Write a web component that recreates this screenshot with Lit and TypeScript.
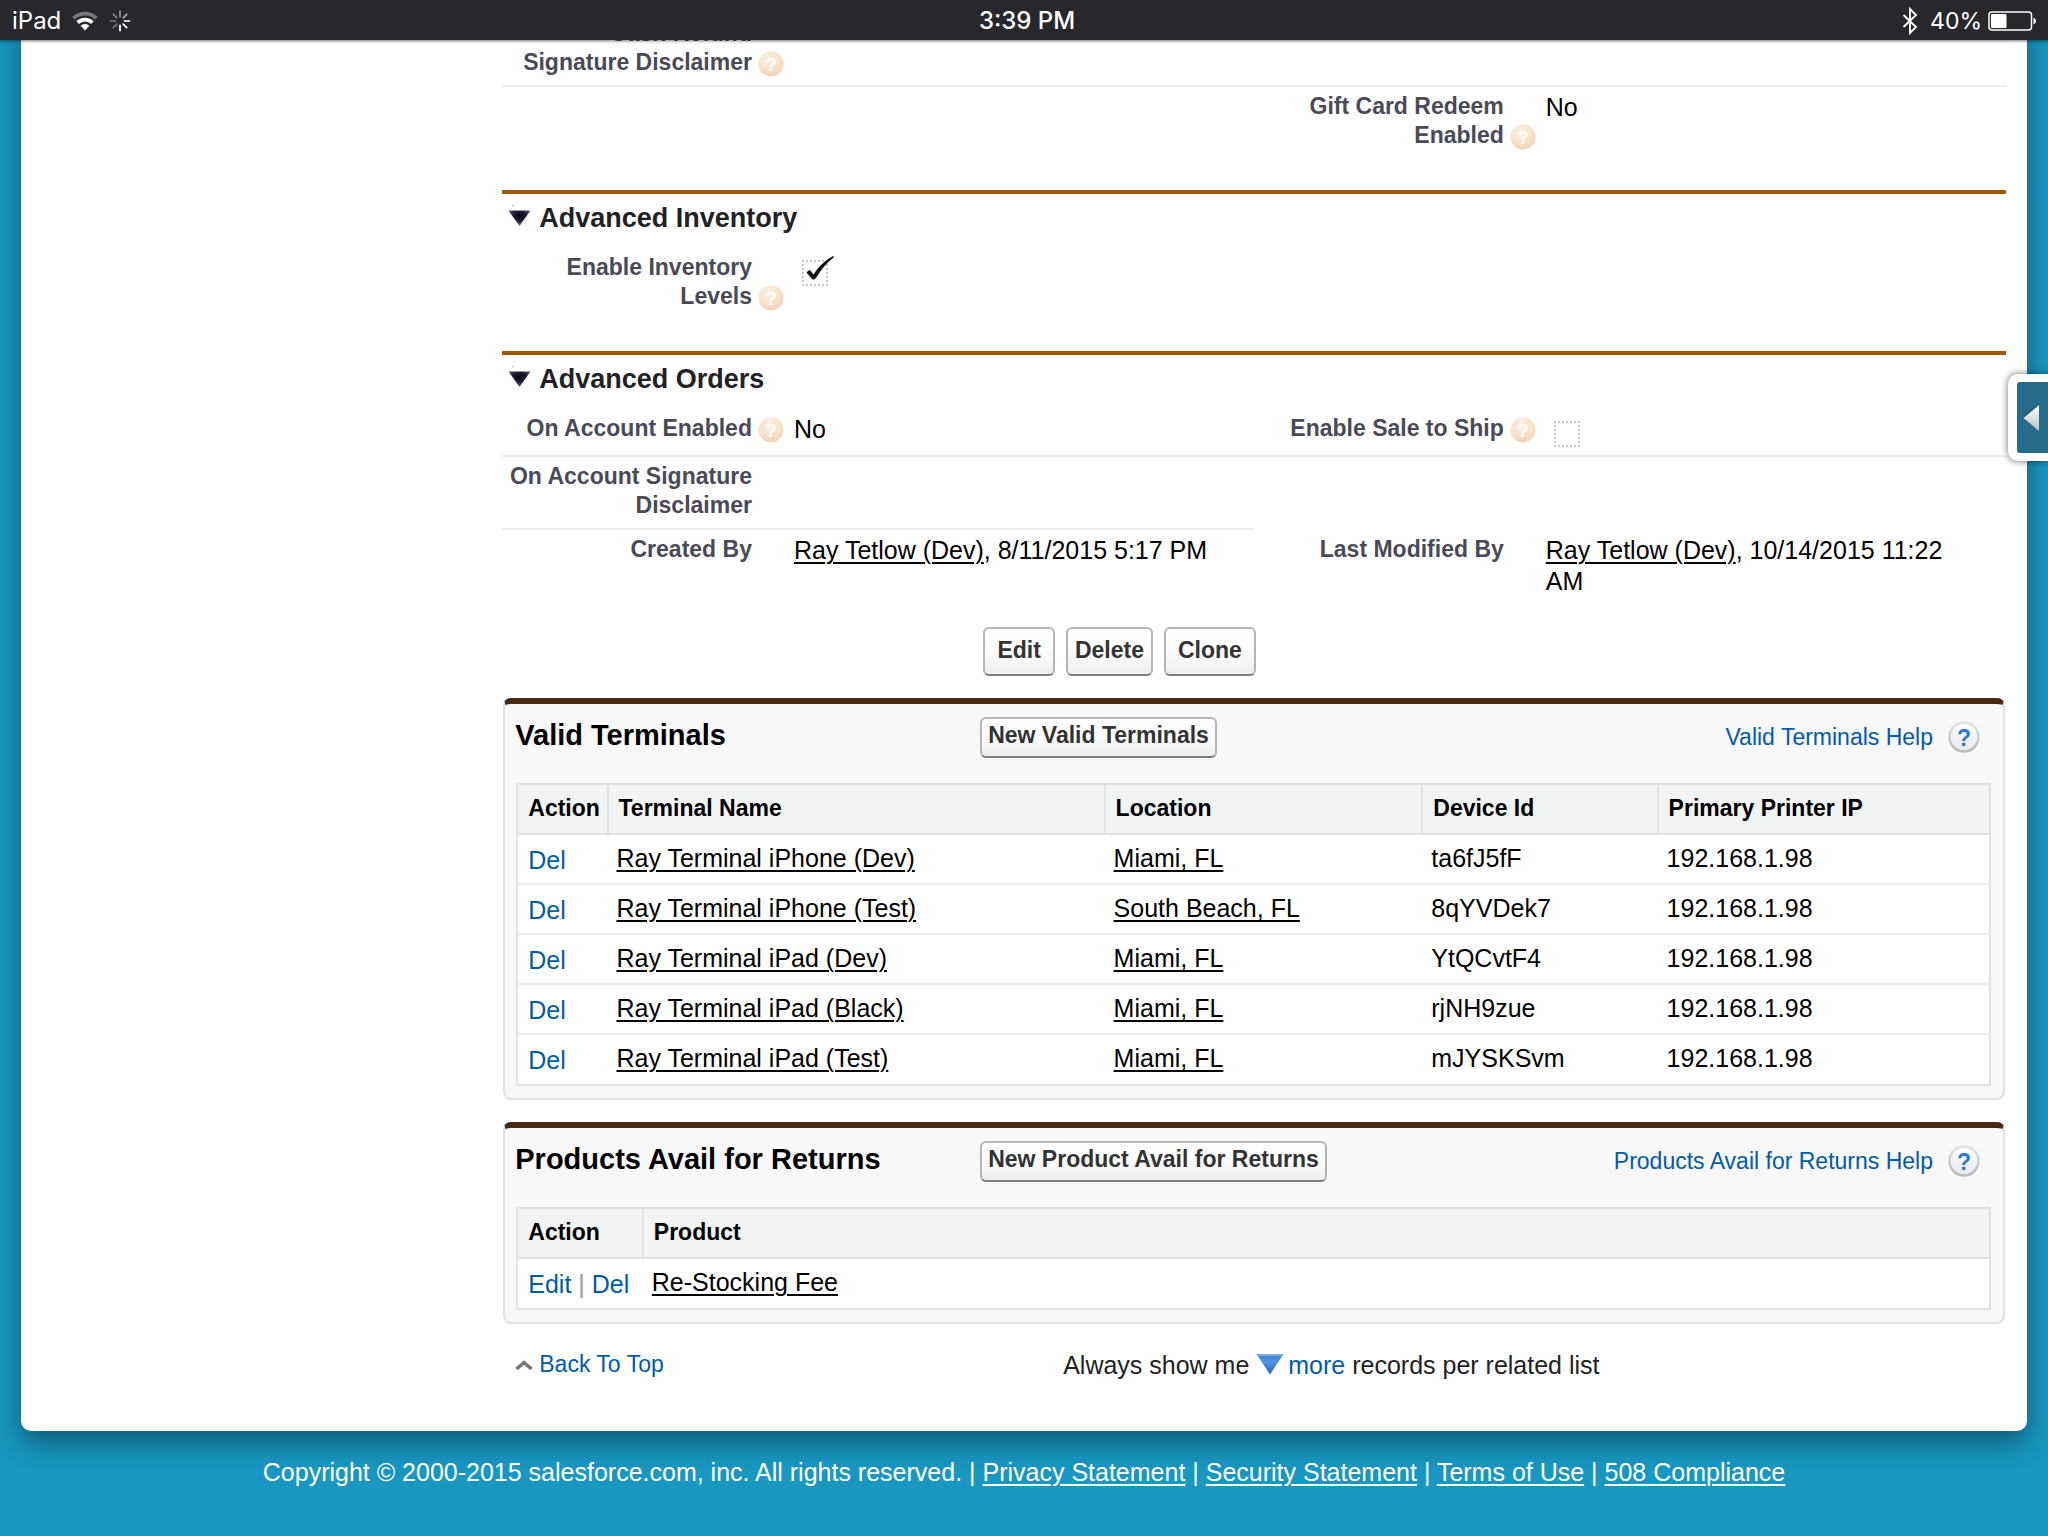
import { LitElement, html, css, svg, nothing, TemplateResult } from "lit";
import { customElement, property, state } from "lit/decorators.js";

const helpBadge = html`<svg class="badge" viewBox="0 0 26 26" role="img" aria-label="Help">
    <defs>
      <radialGradient id="warm" cx="0.42" cy="0.3" r="0.75">
        <stop offset="0" stop-color="#fbf0e2" />
        <stop offset="0.55" stop-color="#f8e3c8" />
        <stop offset="1" stop-color="#efcfb6" />
      </radialGradient>
    </defs>
    <circle cx="13" cy="13" r="12.5" fill="url(#warm)" />
    <text x="13" y="20" text-anchor="middle">?</text>
  </svg>`;

const spokes = [0.5, 0.6, 0.8, 1, 1, 0.35, 0.3, 0.4];

interface Field {
  label: string;
  value?: TemplateResult | string;
  help?: boolean;
}
interface Row {
  left?: Field;
  right?: Field;
  line?: "full" | "half";
  single?: boolean;
}

const sharedText = css`
  a {
    color: #015ba7;
    text-decoration: none;
  }
  a.name {
    color: #000;
    text-decoration: underline;
    text-decoration-thickness: 2px;
    text-underline-offset: 3px;
  }
  button {
    font: bold 23px/29px "Liberation Sans", Arial, sans-serif;
    color: #333;
    margin: 0;
    cursor: pointer;
  }
  .btn {
    border: 2px solid #b5b5b5;
    border-bottom-color: #7f7f7f;
    border-radius: 6px;
    background: linear-gradient(#fff, #fdfdfd 40%, #efefef);
    white-space: nowrap;
  }
`;

@customElement("status-bar")
export class StatusBar extends LitElement {
  static styles = css`
    :host {
      display: grid;
      grid-template-columns: 1fr auto 1fr;
      align-items: center;
      height: 40px;
      padding: 2px 12px 0;
      box-sizing: border-box;
      background: #27272c;
      color: #fff;
      font: 24px/38px Inter, Roboto, sans-serif;
      box-shadow: 0 1px 3px rgba(0, 0, 0, 0.55);
    }
    .side {
      display: flex;
      align-items: center;
    }
    .end {
      justify-content: flex-end;
      font-size: 23px;
    }
    .time {
      font-weight: 500;
      padding-left: 6px;
    }
    .wifi {
      width: 26px;
      height: 20px;
      margin-left: 11px;
    }
    .spin {
      width: 22px;
      height: 22px;
      margin-left: 11px;
    }
    .bt {
      width: 16px;
      height: 28px;
      margin-right: 12px;
    }
    .battery {
      width: 48px;
      height: 20px;
      margin-left: 6px;
    }
  `;

  render() {
    return html`
      <div class="side">
        <span>iPad</span>
        <svg class="wifi" viewBox="0 0 26 20" fill="none" stroke="#fff" stroke-width="3.6">
          <path d="M1.5 7.3A16.4 16.4 0 0 1 24.500 7.3" stroke="#77777b" />
          <path d="M5.6 11.6A10.6 10.6 0 0 1 20.400 11.600" />
          <path d="M13 19.500L8.600 14.700A6.400 6.400 0 0 1 17.400 14.700Z" fill="#fff" stroke="none" />
        </svg>
        <svg class="spin" viewBox="0 0 22 22" stroke="#fff" stroke-width="1.8" stroke-linecap="round">
          ${spokes.map(
            (o, i) => svg`<path d="M11 1.500V6.500" opacity=${o} transform="rotate(${i * 45} 11 11)" />`
          )}
        </svg>
      </div>
      <span class="time">3:39 PM</span>
      <div class="side end">
        <svg class="bt" viewBox="0 0 16 28" fill="none" stroke="#fff" stroke-width="1.9">
          <path d="M1.500 8L14 20L8 26V2L14 8L1.500 20" />
        </svg>
        <span>40%</span>
        <svg class="battery" viewBox="0 0 48 20">
          <rect x="1" y="1" width="42.500" height="18" rx="3" fill="none" stroke="#fff" stroke-width="1.500" />
          <rect x="3" y="3" width="15.500" height="14" rx="1" fill="#fff" />
          <path d="M45.500 6.500Q48 7.500 48 10T45.500 13.500Z" fill="#fff" />
        </svg>
      </div>
    `;
  }
}

@customElement("detail-section")
export class DetailSection extends LitElement {
  @property() heading = "";
  @property({ attribute: false }) rows: Row[] = [];
  @state() private open = true;

  static styles = [
    sharedText,
    css`
      :host {
        display: block;
      }
      .head {
        display: flex;
        align-items: center;
        gap: 8px;
        margin: 0;
        padding: 8px 6px 14px;
        border-top: 4px solid #995a02;
        font-size: 27px;
        line-height: 32px;
        color: #222226;
      }
      .toggle {
        display: flex;
        padding: 0;
        border: 0;
        background: none;
      }
      .toggle svg {
        width: 23px;
        height: 28px;
      }
      .fields {
        margin: 0;
      }
      .row {
        display: grid;
        grid-template-columns: 18fr 32fr 18fr 32fr;
        min-height: 71px;
      }
      .row.single {
        min-height: 48px;
      }
      dt,
      dd {
        margin: 0;
      }
      dt {
        padding: 5px 21px 8px 4px;
        text-align: right;
        font-weight: bold;
        font-size: 23px;
        line-height: 29px;
        color: #4a4a56;
      }
      dd {
        padding: 5px 21px 4px 21px;
        font-size: 25px;
        line-height: 31px;
        color: #000;
      }
      .line {
        border-bottom: 2px solid #ececec;
      }
      .badge {
        width: 26px;
        height: 26px;
        margin: -4px -32px -4px 6px;
        vertical-align: -3px;
      }
      .badge text {
        fill: #fff;
        font: bold 19px "Liberation Sans", Arial, sans-serif;
      }
    `,
  ];

  private pair(f: Field | undefined, line: boolean) {
    const cls = line ? "line" : "";
    return html`
      <dt class=${cls}>${f?.label}${f?.help ? helpBadge : nothing}</dt>
      <dd class=${cls}>${f?.value}</dd>
    `;
  }

  render() {
    return html`
      ${this.heading
        ? html`<h3 class="head">
            <button
              class="toggle"
              type="button"
              aria-label="Toggle ${this.heading}"
              aria-expanded=${this.open}
              @click=${() => (this.open = !this.open)}
            >
              <svg viewBox="0 0 23 28">
                <defs>
                  <radialGradient id="ink" cx="0.5" cy="0.35" r="0.6">
                    <stop offset="0" stop-color="#05050c" />
                    <stop offset="0.5" stop-color="#1c1c36" />
                    <stop offset="1" stop-color="#5c5e82" />
                  </radialGradient>
                </defs>
                <circle cx="5" cy="1.500" r="1.200" fill="#d4d4de" />
                <path d="M0.500 6.500H22.500L11.500 22Z" fill="url(#ink)" />
              </svg>
            </button>
            <span>${this.heading}</span>
          </h3>`
        : nothing}
      ${this.open
        ? html`<dl class="fields">
            ${this.rows.map(
              (r) => html`<div class="row ${r.single ? "single" : ""}">
                ${this.pair(r.left, !!r.line)} ${this.pair(r.right, r.line === "full")}
              </div>`
            )}
          </dl>`
        : nothing}
    `;
  }
}

@customElement("check-mark")
export class CheckMark extends LitElement {
  @property({ type: Boolean }) checked = false;
  @property() label = "";

  static styles = css`
    :host {
      display: flex;
      padding: 7px 0 0 8px;
    }
    .box {
      position: relative;
      display: flex;
    }
    input {
      appearance: none;
      box-sizing: border-box;
      width: 26px;
      height: 26px;
      margin: 0;
      border: 2px dotted #c8c8c8;
      background: #fff;
      pointer-events: none;
    }
    svg {
      position: absolute;
      left: 3px;
      top: -5px;
      width: 30px;
      height: 28px;
    }
  `;

  render() {
    return html`<label class="box">
      <input type="checkbox" aria-label=${this.label} .checked=${this.checked} />
      ${this.checked
        ? html`<svg viewBox="0 0 30 28">
            <path
              d="M1.500 17.500Q4 14.500 5.500 15.500L8.500 19.500Q15.500 8 28 1Q29.500 1 28.500 2.500Q18 11 11 23Q8.500 25.500 7 24Q4.500 21 1.500 17.500Z"
              fill="#111"
            />
          </svg>`
        : nothing}
    </label>`;
  }
}

@customElement("related-list")
export class RelatedList extends LitElement {
  @property() heading = "";
  @property() create = "";
  @property({ attribute: false }) columns: string[] = [];
  @property({ attribute: false }) widths: string[] = [];
  @property({ attribute: false }) actions: string[] = [];
  @property({ attribute: false }) linked: number[] = [];
  @property({ attribute: false }) records: string[][] = [];

  static styles = [
    sharedText,
    css`
      :host {
        display: block;
        margin: 22px 1px 0;
      }
      .card {
        border: 2px solid #e0e3e5;
        border-top: 6px solid #4a2811;
        border-radius: 8px;
        background: #f8f8f8;
        padding-bottom: 12px;
      }
      .top {
        display: grid;
        grid-template-columns: 465fr 1000fr;
        height: 79px;
        box-sizing: border-box;
        padding: 13px 23px 0 10px;
        align-items: start;
      }
      h3 {
        margin: 0;
        font-size: 29px;
        line-height: 35px;
        padding-top: 1px;
        color: #000;
      }
      .tools {
        display: flex;
        justify-content: space-between;
        align-items: flex-start;
      }
      .btn {
        padding: 2px 6px 6px;
      }
      .help {
        display: flex;
        align-items: center;
        gap: 15px;
        padding-top: 4px;
        font-size: 23px;
        line-height: 32px;
      }
      .help svg {
        width: 32px;
        height: 32px;
      }
      .help text {
        fill: #2f78d2;
        font: bold 23px "Liberation Sans", Arial, sans-serif;
      }
      .grid {
        margin: 0 12px 0 11px;
      }
      table {
        width: 100%;
        table-layout: fixed;
        border-collapse: separate;
        border-spacing: 0;
        border: 2px solid #e0e3e5;
        background: #fff;
      }
      th,
      td {
        box-sizing: border-box;
        height: 50px;
        padding: 8px 0 0 10px;
        text-align: left;
        vertical-align: top;
        font-size: 25px;
        line-height: 31px;
        color: #000;
        border-bottom: 2px solid #ececec;
        white-space: nowrap;
      }
      th {
        padding-top: 9px;
        font-size: 23px;
        line-height: 29px;
        background: #f2f3f3;
        border-bottom-color: #e0e3e5;
      }
      th + th {
        border-left: 2px solid #e0e3e5;
      }
      td.action {
        padding-top: 10px;
        line-height: 30px;
        color: #999;
      }
      tr:last-child td {
        height: 49px;
        border-bottom: 0;
      }
    `,
  ];

  render() {
    return html`<section class="card">
      <div class="top">
        <h3>${this.heading}</h3>
        <div class="tools">
          <button class="btn" type="button">${this.create}</button>
          <a class="help" href="#help">
            <span>${this.heading} Help</span>
            <svg viewBox="0 0 32 32" aria-hidden="true">
              <defs>
                <linearGradient id="rim" x2="0" y2="1">
                  <stop offset="0" stop-color="#e2e2e2" />
                  <stop offset="1" stop-color="#b9b9b9" />
                </linearGradient>
                <linearGradient id="face" x2="0" y2="1">
                  <stop offset="0" stop-color="#fdfdfd" />
                  <stop offset="1" stop-color="#e6eaf2" />
                </linearGradient>
              </defs>
              <circle cx="16" cy="16" r="14.500" fill="url(#face)" stroke="url(#rim)" stroke-width="2.500" />
              <text x="16" y="24.500" text-anchor="middle">?</text>
            </svg>
          </a>
        </div>
      </div>
      <div class="grid">
        <table>
          <colgroup>
            ${this.widths.map((w) => html`<col style="width:${w}" />`)}
          </colgroup>
          <thead>
            <tr>
              ${this.columns.map((c) => html`<th scope="col">${c}</th>`)}
            </tr>
          </thead>
          <tbody>
            ${this.records.map(
              (rec) => html`<tr>
                <td class="action">
                  ${this.actions.map((a, i) => html`${i ? " | " : ""}<a href="#${a}">${a}</a>`)}
                </td>
                ${rec.map(
                  (v, i) =>
                    html`<td>${this.linked.includes(i) ? html`<a class="name" href="#record">${v}</a>` : v}</td>`
                )}
              </tr>`
            )}
          </tbody>
        </table>
      </div>
    </section>`;
  }
}

@customElement("app-root")
export class AppRoot extends LitElement {
  static styles = [
    sharedText,
    css`
      :host {
        display: block;
        position: relative;
        min-height: 100vh;
        overflow: hidden;
        background: #1897c1;
        font-family: "Liberation Sans", Arial, sans-serif;
      }
      status-bar {
        position: relative;
        z-index: 2;
      }
      .sheet {
        margin: -26px 21px 0;
        padding: 0 21px 50px 23.5%;
        background: #fff;
        border-radius: 0 0 10px 10px;
        box-shadow: 0 12px 26px rgba(0, 0, 0, 0.38);
      }
      .spaced {
        margin-bottom: 32px;
      }
      .buttons {
        display: flex;
        gap: 11px;
        padding: 26px 0 0 32%;
      }
      .buttons .btn {
        padding: 7px 12px 9px;
      }
      .buttons .tight {
        padding-left: 7px;
        padding-right: 7px;
      }
      .more {
        display: grid;
        grid-template-columns: 561fr 943fr;
        padding-top: 26px;
        font-size: 25px;
        line-height: 31px;
        color: #222;
      }
      .top {
        display: flex;
        align-items: center;
        gap: 6px;
        padding-left: 13px;
        font-size: 23px;
        line-height: 29px;
        place-self: start;
      }
      .top svg {
        width: 18px;
        height: 10px;
      }
      .drop {
        width: 28px;
        height: 22px;
        margin-right: 4px;
        vertical-align: -1px;
      }
      .foot {
        padding: 26px 21px 20px;
        text-align: center;
        font-size: 25px;
        line-height: 31px;
        color: #fff;
      }
      .foot a {
        color: #fff;
        text-decoration: underline;
        text-decoration-thickness: 2px;
        text-underline-offset: 3px;
      }
      .drawer {
        position: absolute;
        z-index: 1;
        right: 0;
        top: 374px;
        display: flex;
        padding: 8px 0 8px 9px;
        border: 0;
        border-radius: 10px 0 0 10px;
        background: #fff;
        box-shadow: 0 0 6px 1px rgba(0, 0, 0, 0.45);
      }
      .pane {
        display: flex;
        align-items: center;
        justify-content: center;
        width: 31px;
        height: 71px;
        box-sizing: border-box;
        padding: 0 3px 2px 0;
        border-radius: 3px 0 0 3px;
        background: #256c89;
      }
      .pane svg {
        width: 18px;
        height: 30px;
      }
    `,
  ];

  private person = html`<a class="name" href="#user">Ray Tetlow (Dev)</a>`;

  render() {
    return html`
      <status-bar></status-bar>
      <main class="sheet">
        <detail-section
          class="spaced"
          .rows=${[
            { left: { label: "Cash Refund Signature Disclaimer", help: true }, line: "full" },
            { right: { label: "Gift Card Redeem Enabled", value: "No", help: true } },
          ]}
        ></detail-section>
        <detail-section
          class="spaced"
          heading="Advanced Inventory"
          .rows=${[
            {
              left: {
                label: "Enable Inventory Levels",
                help: true,
                value: html`<check-mark label="Enable Inventory Levels" checked></check-mark>`,
              },
            },
          ]}
        ></detail-section>
        <detail-section
          heading="Advanced Orders"
          .rows=${[
            {
              left: { label: "On Account Enabled", value: "No", help: true },
              right: {
                label: "Enable Sale to Ship",
                help: true,
                value: html`<check-mark label="Enable Sale to Ship"></check-mark>`,
              },
              line: "full",
              single: true,
            },
            { left: { label: "On Account Signature Disclaimer" }, line: "half" },
            {
              left: { label: "Created By", value: html`${this.person}, 8/11/2015 5:17 PM` },
              right: { label: "Last Modified By", value: html`${this.person}, 10/14/2015 11:22 AM` },
            },
          ]}
        ></detail-section>

        <div class="buttons">
          <button class="btn" type="button">Edit</button>
          <button class="btn tight" type="button">Delete</button>
          <button class="btn" type="button">Clone</button>
        </div>

        <related-list
          heading="Valid Terminals"
          create="New Valid Terminals"
          .columns=${["Action", "Terminal Name", "Location", "Device Id", "Primary Printer IP"]}
          .widths=${["6%", "33.8%", "21.6%", "16%", "22.6%"]}
          .actions=${["Del"]}
          .linked=${[0, 1]}
          .records=${[
            ["Ray Terminal iPhone (Dev)", "Miami, FL", "ta6fJ5fF", "192.168.1.98"],
            ["Ray Terminal iPhone (Test)", "South Beach, FL", "8qYVDek7", "192.168.1.98"],
            ["Ray Terminal iPad (Dev)", "Miami, FL", "YtQCvtF4", "192.168.1.98"],
            ["Ray Terminal iPad (Black)", "Miami, FL", "rjNH9zue", "192.168.1.98"],
            ["Ray Terminal iPad (Test)", "Miami, FL", "mJYSKSvm", "192.168.1.98"],
          ]}
        ></related-list>

        <related-list
          heading="Products Avail for Returns"
          create="New Product Avail for Returns"
          .columns=${["Action", "Product"]}
          .widths=${["8.4%", "91.6%"]}
          .actions=${["Edit", "Del"]}
          .linked=${[0]}
          .records=${[["Re-Stocking Fee"]]}
        ></related-list>

        <div class="more">
          <a class="top" href="#top">
            <svg viewBox="0 0 18 10" fill="none" stroke="#777" stroke-width="3.500">
              <path d="M1.500 9L9 2.500L16.500 9" />
            </svg>
            <span>Back To Top</span>
          </a>
          <span>
            Always show me
            <a href="#more"
              ><svg class="drop" viewBox="0 0 28 22" aria-hidden="true">
                <defs>
                  <linearGradient id="blue" x2="0" y2="1">
                    <stop offset="0" stop-color="#3f7fd0" />
                    <stop offset="0.4" stop-color="#4f92e4" />
                    <stop offset="1" stop-color="#2a62ad" />
                  </linearGradient>
                </defs>
                <path d="M0.500 1H27.500L14 21.500Z" fill="url(#blue)" />
                <path d="M0.500 1H27.500L26 3H2Z" fill="#7ea9de" /></svg
              >more</a
            >
            records per related list
          </span>
        </div>
      </main>
      <footer class="foot">
        Copyright © 2000-2015 salesforce.com, inc. All rights reserved. |
        <a href="#privacy">Privacy Statement</a> | <a href="#security">Security Statement</a> |
        <a href="#terms">Terms of Use</a> | <a href="#compliance">508 Compliance</a>
      </footer>
      <button class="drawer" type="button" aria-label="Open side panel">
        <span class="pane">
          <svg viewBox="0 0 18 30">
            <defs>
              <linearGradient id="steel" x2="0" y2="1">
                <stop offset="0" stop-color="#fff" />
                <stop offset="1" stop-color="#b9bfc3" />
              </linearGradient>
            </defs>
            <path d="M17 1V27L1.500 14Z" fill="#123e50" opacity="0.45" />
            <path d="M17 3V29L1.500 16Z" fill="url(#steel)" />
          </svg>
        </span>
      </button>
    `;
  }
}
